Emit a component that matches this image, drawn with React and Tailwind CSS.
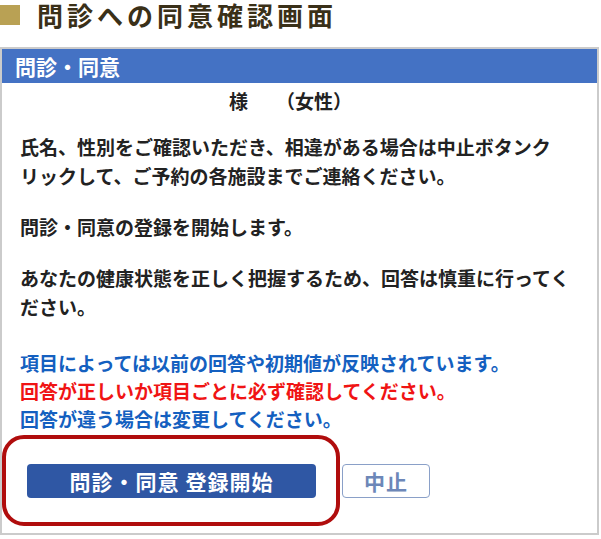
import React from "react";

// 問診・同意の確認画面
const App = () => {
  return (
    <div
      lang="ja"
      className="w-[601px] h-[539px] bg-white overflow-hidden font-['Noto_Sans_CJK_JP','Noto_Sans',sans-serif] [line-break:strict]"
    >
      {/* 見出し */}
      <div className="flex items-center h-[30px] mb-[17px]">
        <span className="w-[20px] h-[20px] bg-[#b9a154] shrink-0" />
        <h1 className="ml-[17px] shrink-0 whitespace-nowrap text-[26px] leading-[30px] font-bold tracking-[4px] text-[#3a3018]">
          問診への同意確認画面
        </h1>
      </div>

      {/* パネル */}
      <div className="w-[599px] border-2 border-[#cbcbcb] pb-[7px]">
        <div className="h-[34px] bg-[#4472c4] flex items-center pl-[13px]">
          <span className="text-white text-[21px] font-bold leading-none">問診・同意</span>
        </div>

        <p className="mt-[7px] pl-[227px] flex text-[19px] leading-[22px] font-semibold text-[#222]">
          <span>様</span>
          <span className="ml-[28px]">（女性）</span>
        </p>

        <div className="px-[18px] text-[19px] leading-[29px] font-semibold text-[#222]">
          <p className="mt-[20px]">
            氏名、性別をご確認いただき、相違がある場合は中止ボタンク<wbr />リックして、ご予約の各施設までご連絡ください。
          </p>
          <p className="mt-[22px]">問診・同意の登録を開始します。</p>
          <p className="mt-[22px]">
            あなたの健康状態を正しく把握するため、回答は慎重に行ってください。
          </p>
        </div>

        <div className="mt-[28px] px-[18px] text-[19px] leading-[28px] font-bold">
          <p className="text-[#1460c0]">項目によっては以前の回答や初期値が反映されています。</p>
          <p className="text-[#f01414]">回答が正しいか項目ごとに必ず確認してください。</p>
          <p className="text-[#1460c0]">回答が違う場合は変更してください。</p>
        </div>

        <div className="relative mt-[2px] pt-[29px] pb-[28px] pl-[25px] flex items-center gap-[26px]">
          <button className="w-[289px] h-[34px] rounded-[4px] bg-[#2f57a4] text-white text-[21px] font-bold tracking-[1px] leading-none">
            問診・同意 登録開始
          </button>
          <button className="w-[88px] h-[34px] rounded-[4px] border border-[#8aa0c8] bg-white text-[#6d87b8] text-[21px] font-bold tracking-[1px] leading-none">
            中止
          </button>
          {/* 注目枠 */}
          <div className="absolute left-0 top-0 w-[338px] h-[91px] border-[4px] border-[#b00d0d] rounded-[22px] pointer-events-none" />
        </div>
      </div>
    </div>
  );
};

export default App;
